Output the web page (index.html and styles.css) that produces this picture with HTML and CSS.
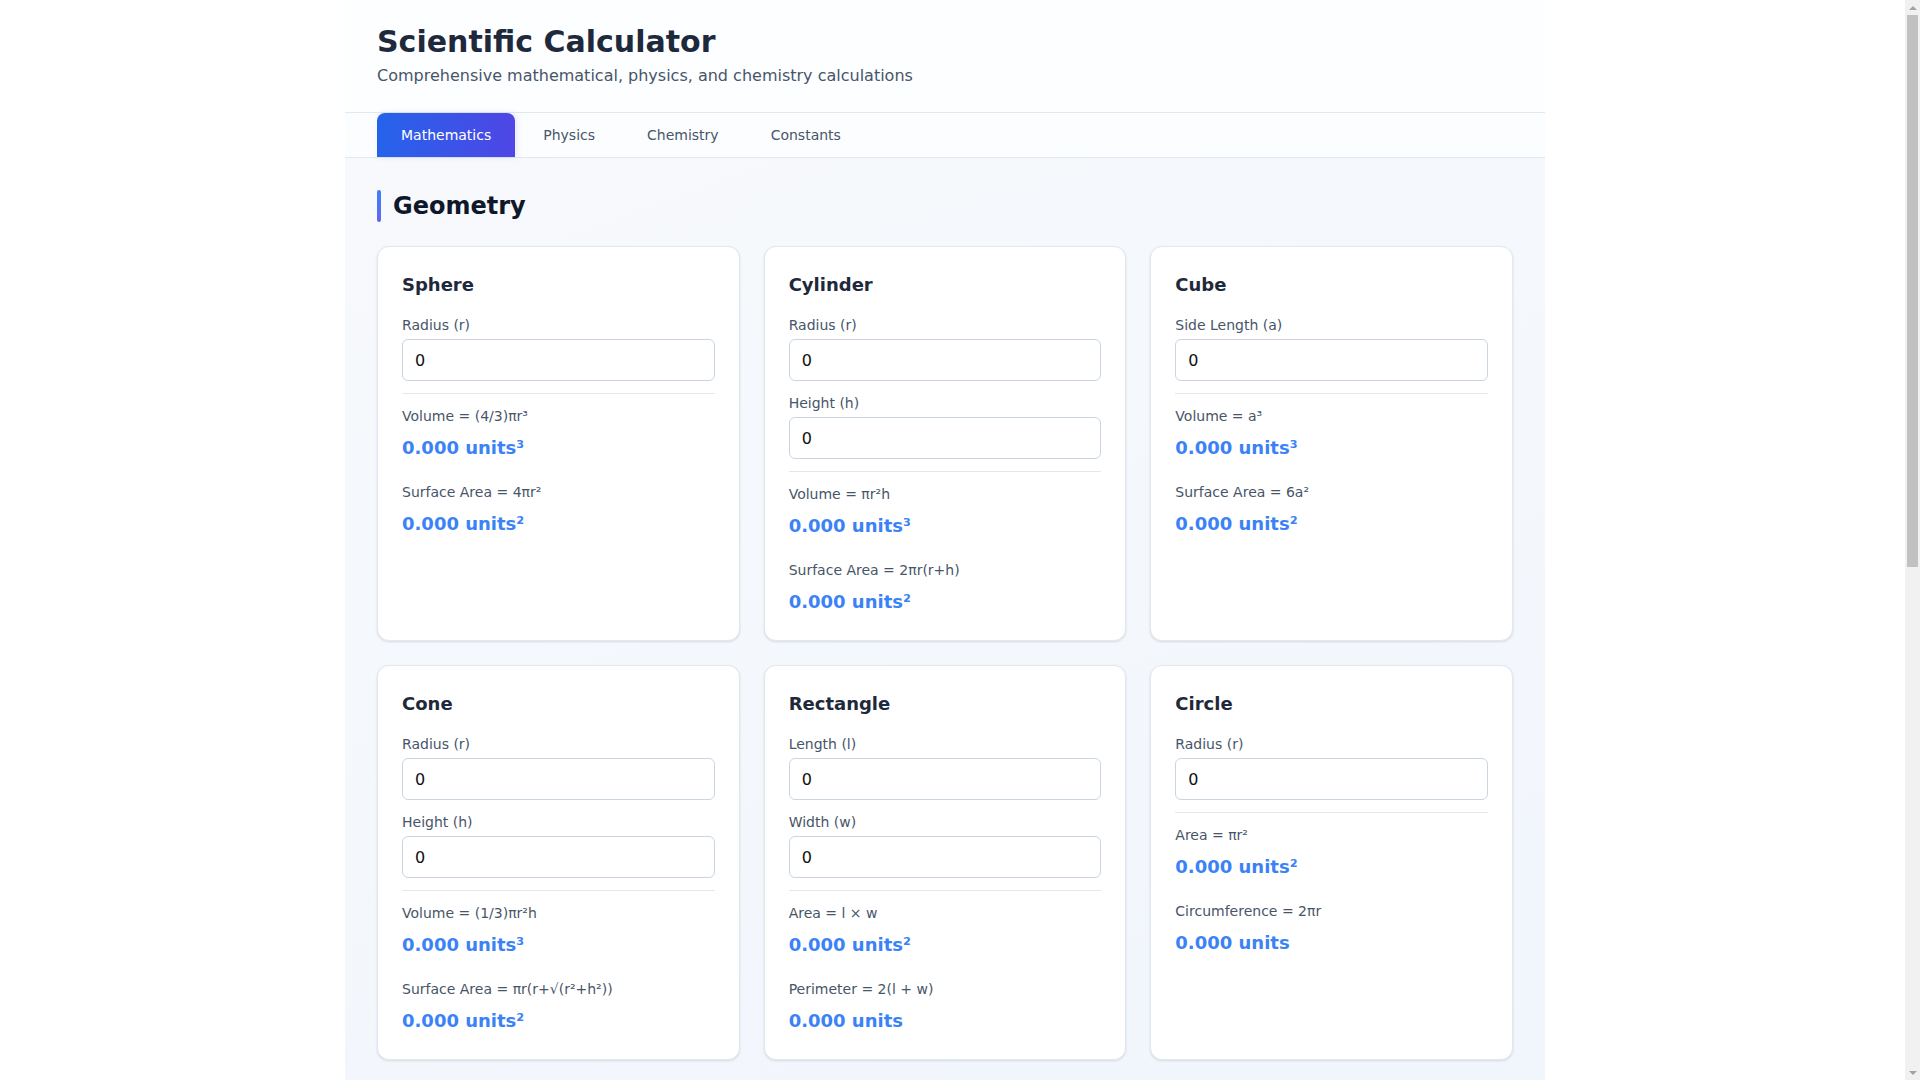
FILE: index.html
```html
<!DOCTYPE html>
<html lang="en">
<head>
    <meta charset="UTF-8">
    <meta name="viewport" content="width=device-width, initial-scale=1">
    <title>Scientific Calculator</title>
    <link rel="stylesheet" href="styles.css">
</head>
<body>
<div class="page">

    <div class="header">
        <h1>Scientific Calculator</h1>
        <p>Comprehensive mathematical, physics, and chemistry calculations</p>
    </div>

    <div class="tabs">
        <button type="button" class="tab active">Mathematics</button>
        <button type="button" class="tab">Physics</button>
        <button type="button" class="tab">Chemistry</button>
        <button type="button" class="tab">Constants</button>
    </div>

    <div class="main">

        <div class="section">
            <h2 class="section-title">Geometry</h2>
            <div class="grid">

                <div class="card">
                    <h3>Sphere</h3>
                    <div class="field">
                        <label>Radius (r)</label>
                        <input type="number" value="0">
                    </div>
                    <div class="results">
                        <div class="result">
                            <div class="result-label">Volume = (4/3)πr³</div>
                            <div class="result-value">0.000 units³</div>
                        </div>
                        <div class="result">
                            <div class="result-label">Surface Area = 4πr²</div>
                            <div class="result-value">0.000 units²</div>
                        </div>
                    </div>
                </div>

                <div class="card">
                    <h3>Cylinder</h3>
                    <div class="field">
                        <label>Radius (r)</label>
                        <input type="number" value="0">
                    </div>
                    <div class="field">
                        <label>Height (h)</label>
                        <input type="number" value="0">
                    </div>
                    <div class="results">
                        <div class="result">
                            <div class="result-label">Volume = πr²h</div>
                            <div class="result-value">0.000 units³</div>
                        </div>
                        <div class="result">
                            <div class="result-label">Surface Area = 2πr(r+h)</div>
                            <div class="result-value">0.000 units²</div>
                        </div>
                    </div>
                </div>

                <div class="card">
                    <h3>Cube</h3>
                    <div class="field">
                        <label>Side Length (a)</label>
                        <input type="number" value="0">
                    </div>
                    <div class="results">
                        <div class="result">
                            <div class="result-label">Volume = a³</div>
                            <div class="result-value">0.000 units³</div>
                        </div>
                        <div class="result">
                            <div class="result-label">Surface Area = 6a²</div>
                            <div class="result-value">0.000 units²</div>
                        </div>
                    </div>
                </div>

                <div class="card">
                    <h3>Cone</h3>
                    <div class="field">
                        <label>Radius (r)</label>
                        <input type="number" value="0">
                    </div>
                    <div class="field">
                        <label>Height (h)</label>
                        <input type="number" value="0">
                    </div>
                    <div class="results">
                        <div class="result">
                            <div class="result-label">Volume = (1/3)πr²h</div>
                            <div class="result-value">0.000 units³</div>
                        </div>
                        <div class="result">
                            <div class="result-label">Surface Area = πr(r+√(r²+h²))</div>
                            <div class="result-value">0.000 units²</div>
                        </div>
                    </div>
                </div>

                <div class="card">
                    <h3>Rectangle</h3>
                    <div class="field">
                        <label>Length (l)</label>
                        <input type="number" value="0">
                    </div>
                    <div class="field">
                        <label>Width (w)</label>
                        <input type="number" value="0">
                    </div>
                    <div class="results">
                        <div class="result">
                            <div class="result-label">Area = l × w</div>
                            <div class="result-value">0.000 units²</div>
                        </div>
                        <div class="result">
                            <div class="result-label">Perimeter = 2(l + w)</div>
                            <div class="result-value">0.000 units</div>
                        </div>
                    </div>
                </div>

                <div class="card">
                    <h3>Circle</h3>
                    <div class="field">
                        <label>Radius (r)</label>
                        <input type="number" value="0">
                    </div>
                    <div class="results">
                        <div class="result">
                            <div class="result-label">Area = πr²</div>
                            <div class="result-value">0.000 units²</div>
                        </div>
                        <div class="result">
                            <div class="result-label">Circumference = 2πr</div>
                            <div class="result-value">0.000 units</div>
                        </div>
                    </div>
                </div>

            </div>
        </div>

        <div class="section">
            <h2 class="section-title">Algebra</h2>
            <div class="grid">

                <div class="card">
                    <h3>Power</h3>
                    <div class="field">
                        <label>Base (x)</label>
                        <input type="number" value="0">
                    </div>
                    <div class="field">
                        <label>Exponent (n)</label>
                        <input type="number" value="0">
                    </div>
                    <div class="results">
                        <div class="result">
                            <div class="result-label">Result = xⁿ</div>
                            <div class="result-value">0.000</div>
                        </div>
                        <div class="result">
                            <div class="result-label">Root = ⁿ√x</div>
                            <div class="result-value">0.000</div>
                        </div>
                    </div>
                </div>

                <div class="card">
                    <h3>Logarithm</h3>
                    <div class="field">
                        <label>Value (x)</label>
                        <input type="number" value="0">
                    </div>
                    <div class="field">
                        <label>Base (b)</label>
                        <input type="number" value="0">
                    </div>
                    <div class="results">
                        <div class="result">
                            <div class="result-label">log_b(x)</div>
                            <div class="result-value">0.000</div>
                        </div>
                        <div class="result">
                            <div class="result-label">ln(x)</div>
                            <div class="result-value">0.000</div>
                        </div>
                    </div>
                </div>

                <div class="card">
                    <h3>Percentage</h3>
                    <div class="field">
                        <label>Value</label>
                        <input type="number" value="0">
                    </div>
                    <div class="field">
                        <label>Percent (%)</label>
                        <input type="number" value="0">
                    </div>
                    <div class="results">
                        <div class="result">
                            <div class="result-label">Result = value × % / 100</div>
                            <div class="result-value">0.000</div>
                        </div>
                        <div class="result">
                            <div class="result-label">Increase = value + result</div>
                            <div class="result-value">0.000</div>
                        </div>
                    </div>
                </div>

            </div>
        </div>

    </div>
</div>

<div class="scrollbar">
    <div class="scroll-up"></div>
    <div class="scroll-thumb"></div>
    <div class="scroll-down"></div>
</div>
</body>
</html>
```

FILE: styles.css
```css
* {
    box-sizing: border-box;
}

html, body {
    width: 100%;
}

body {
    font-family: "DejaVu Sans", sans-serif;
    margin: 0;
    padding: 0 30px 0 0;
    background: #fff;
    color: #1e293b;
}

.page {
    max-width: 1200px;
    margin: 0 auto;
}

.header {
    padding: 24px 32px;
    background: #fdfeff;
    border-bottom: 1px solid #e2e8f0;
}

.header h1 {
    margin: 0;
    font-size: 30px;
    line-height: 36px;
    font-weight: bold;
    color: #1e293b;
}

.header p {
    margin: 4px 0 0;
    font-size: 16px;
    line-height: 24px;
    color: #475569;
}

.tabs {
    display: flex;
    gap: 4px;
    padding: 0 32px;
    background: #fcfdfe;
    border-bottom: 1px solid #e2e8f0;
}

.tab {
    font-family: inherit;
    font-size: 14px;
    line-height: 20px;
    padding: 12px 24px;
    border: none;
    border-radius: 8px 8px 0 0;
    background: transparent;
    color: #475569;
    cursor: pointer;
}

.tab.active {
    color: #fff;
    background: linear-gradient(90deg, #2563eb, #4f46e5);
    box-shadow: 2px 0 6px rgba(79, 70, 229, 0.12);
}

.main {
    padding: 32px;
    background: linear-gradient(160deg, #f7f9fc, #eff5fd);
}

.section {
    margin-bottom: 32px;
}

.section:last-child {
    margin-bottom: 0;
}

.section-title {
    position: relative;
    margin: 0 0 24px;
    padding-left: 16px;
    font-size: 24px;
    line-height: 32px;
    font-weight: bold;
    color: #0f172a;
}

.section-title::before {
    content: "";
    position: absolute;
    left: 0;
    top: 0;
    width: 4px;
    height: 32px;
    border-radius: 2px;
    background: linear-gradient(180deg, #3b82f6, #6366f1);
}

.grid {
    display: grid;
    grid-template-columns: repeat(3, 1fr);
    gap: 24px;
}

.card {
    background: #fff;
    border: 1px solid #e2e8f0;
    border-radius: 12px;
    padding: 24px;
    box-shadow: 0 1px 3px rgba(15, 23, 42, 0.08), 0 1px 2px rgba(15, 23, 42, 0.05);
}

.card h3 {
    margin: 0 0 16px;
    font-size: 18px;
    line-height: 28px;
    font-weight: bold;
    color: #1e293b;
}

.field {
    margin-bottom: 12px;
}

.field label {
    display: block;
    margin-bottom: 4px;
    font-size: 14px;
    line-height: 20px;
    color: #475569;
}

.field input {
    display: block;
    width: 100%;
    height: 42px;
    padding: 10px 12px;
    font-family: inherit;
    font-size: 16px;
    color: #111;
    background: #fff;
    border: 1px solid #cbd5e1;
    border-radius: 6px;
    outline: none;
    -moz-appearance: textfield;
}

.field input::-webkit-outer-spin-button,
.field input::-webkit-inner-spin-button {
    -webkit-appearance: none;
    margin: 0;
}

.results {
    border-top: 1px solid #e2e8f0;
    padding-top: 12px;
}

.result {
    margin-bottom: 20px;
}

.result:last-child {
    margin-bottom: 0;
}

.result-label {
    margin-bottom: 8px;
    font-size: 14px;
    line-height: 20px;
    color: #475569;
}

.result-value {
    font-size: 18px;
    line-height: 28px;
    font-weight: bold;
    color: #3b82f6;
}

/* browser scrollbar, as in the screenshot */
.scrollbar {
    position: fixed;
    top: 0;
    right: 0;
    width: 15px;
    height: 100vh;
    background: #f1f1f1;
    display: flex;
    flex-direction: column;
    align-items: center;
}

.scroll-up, .scroll-down {
    flex: 0 0 15px;
    width: 15px;
    display: flex;
    align-items: center;
    justify-content: center;
}

.scroll-up::after {
    content: "";
    border-left: 4px solid transparent;
    border-right: 4px solid transparent;
    border-bottom: 4px solid #a3a3a3;
}

.scroll-down {
    margin-top: auto;
}

.scroll-down::after {
    content: "";
    border-left: 4px solid transparent;
    border-right: 4px solid transparent;
    border-top: 4px solid #a3a3a3;
}

.scroll-thumb {
    width: 11px;
    height: 552px;
    background: #c1c1c1;
}
```
